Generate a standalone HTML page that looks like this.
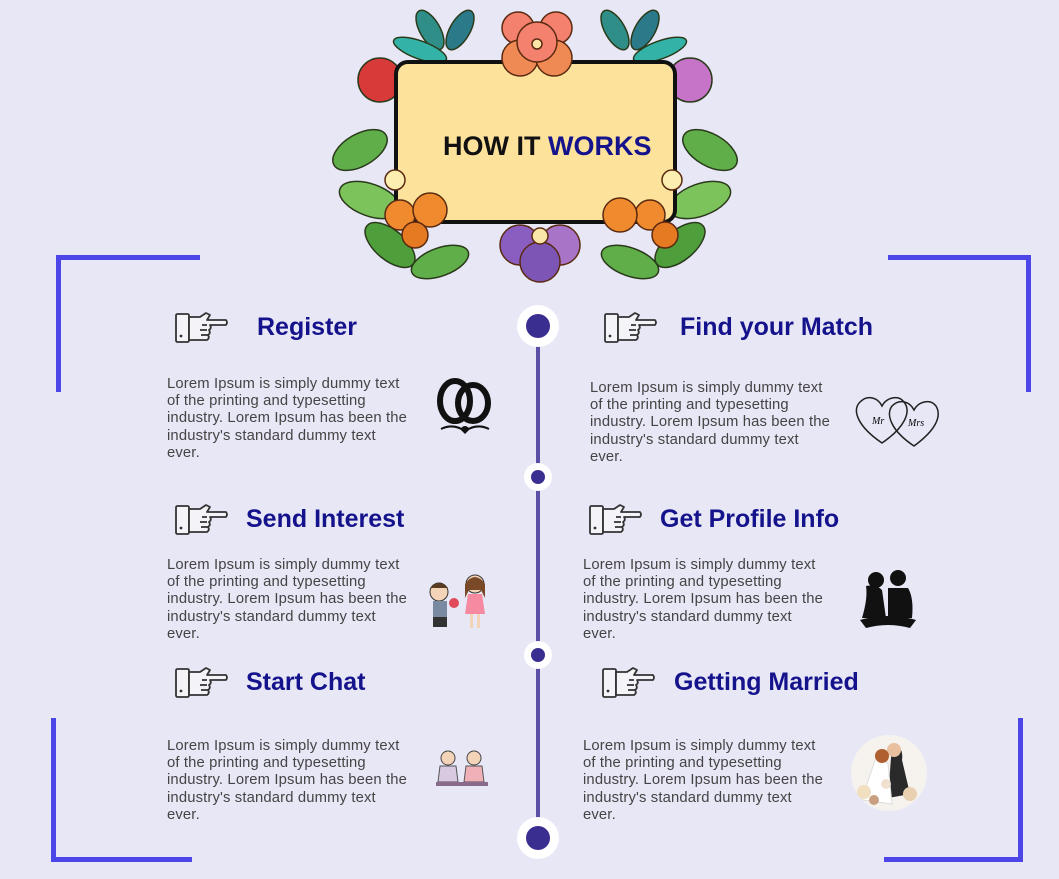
<!DOCTYPE html>
<html><head><meta charset="utf-8"><style>
body{margin:0;width:1059px;height:879px;background:#e8e7f6;position:relative;overflow:hidden;font-family:"Liberation Sans",sans-serif}
.a{position:absolute}
.h{position:absolute;color:#15138c;font-weight:bold;font-size:25px;line-height:30px;white-space:nowrap}
.p{position:absolute;color:#444;font-size:14.8px;line-height:17.2px;white-space:nowrap;letter-spacing:0.15px}
.br{position:absolute;background:#4c45e8}
</style></head><body>
<div class="br" style="left:56px;top:255px;width:5px;height:137px"></div>
<div class="br" style="left:56px;top:255px;width:144px;height:5px"></div>
<div class="br" style="left:1026px;top:255px;width:5px;height:137px"></div>
<div class="br" style="left:888px;top:255px;width:143px;height:5px"></div>
<div class="br" style="left:51px;top:718px;width:5px;height:144px"></div>
<div class="br" style="left:51px;top:857px;width:141px;height:5px"></div>
<div class="br" style="left:1018px;top:718px;width:5px;height:144px"></div>
<div class="br" style="left:884px;top:857px;width:139px;height:5px"></div>

<svg class="a" style="left:320px;top:0" width="430" height="290" viewBox="0 0 430 290">
<g stroke="#2a3a1a" stroke-width="1.5">
<ellipse cx="40" cy="150" rx="30" ry="16" fill="#5fae4a" transform="rotate(-30 40 150)"/>
<ellipse cx="50" cy="200" rx="32" ry="16" fill="#7cc35c" transform="rotate(20 50 200)"/>
<ellipse cx="70" cy="245" rx="30" ry="15" fill="#4f9e3c" transform="rotate(40 70 245)"/>
<ellipse cx="390" cy="150" rx="30" ry="16" fill="#5fae4a" transform="rotate(30 390 150)"/>
<ellipse cx="380" cy="200" rx="32" ry="16" fill="#7cc35c" transform="rotate(-20 380 200)"/>
<ellipse cx="360" cy="245" rx="30" ry="15" fill="#4f9e3c" transform="rotate(-40 360 245)"/>
<ellipse cx="120" cy="262" rx="30" ry="14" fill="#5fae4a" transform="rotate(-20 120 262)"/>
<ellipse cx="310" cy="262" rx="30" ry="14" fill="#5fae4a" transform="rotate(20 310 262)"/>
<ellipse cx="110" cy="30" rx="22" ry="10" fill="#2f8f88" transform="rotate(60 110 30)"/>
<ellipse cx="140" cy="30" rx="22" ry="10" fill="#2b7a8a" transform="rotate(-60 140 30)"/>
<ellipse cx="100" cy="50" rx="28" ry="9" fill="#33b3a8" transform="rotate(20 100 50)"/>
<ellipse cx="295" cy="30" rx="22" ry="10" fill="#2f8f88" transform="rotate(60 295 30)"/>
<ellipse cx="325" cy="30" rx="22" ry="10" fill="#2b7a8a" transform="rotate(-60 325 30)"/>
<ellipse cx="340" cy="50" rx="28" ry="9" fill="#33b3a8" transform="rotate(-20 340 50)"/>
<circle cx="60" cy="80" r="22" fill="#d83a3a"/>
<circle cx="370" cy="80" r="22" fill="#c574c8"/>
</g>
<rect x="76" y="62" width="279" height="160" rx="12" fill="#fde29c" stroke="#111" stroke-width="4"/>
<g stroke="#5a2a10" stroke-width="1.5">
<circle cx="198" cy="28" r="16" fill="#f4806e"/><circle cx="236" cy="28" r="16" fill="#f4806e"/>
<circle cx="200" cy="58" r="18" fill="#f08a55"/><circle cx="234" cy="58" r="18" fill="#f08a55"/>
<circle cx="217" cy="42" r="20" fill="#f4806e"/><circle cx="217" cy="44" r="5" fill="#f9e6a8"/>
<circle cx="200" cy="245" r="20" fill="#8a5ec0"/><circle cx="240" cy="245" r="20" fill="#a874c8"/>
<circle cx="220" cy="262" r="20" fill="#7d55b5"/><circle cx="220" cy="236" r="8" fill="#f9e6a8"/>
<circle cx="80" cy="215" r="15" fill="#f08a2e"/><circle cx="110" cy="210" r="17" fill="#f08a2e"/><circle cx="95" cy="235" r="13" fill="#e57a22"/>
<circle cx="330" cy="215" r="15" fill="#f08a2e"/><circle cx="300" cy="215" r="17" fill="#f08a2e"/><circle cx="345" cy="235" r="13" fill="#e57a22"/>
<circle cx="75" cy="180" r="10" fill="#fbeeb0"/><circle cx="352" cy="180" r="10" fill="#fbeeb0"/>
</g>
<text x="123" y="155" font-family="Liberation Sans" font-weight="bold" font-size="27" fill="#111">HOW IT <tspan fill="#15138c">WORKS</tspan></text>
</svg>

<div class="a" style="left:536px;top:326px;width:4px;height:512px;background:#5b4fa5"></div>
<svg class="a" style="left:510px;top:300px" width="56" height="566">
<circle cx="28" cy="26" r="21" fill="#fff"/><circle cx="28" cy="26" r="12" fill="#3b2e91"/>
<circle cx="28" cy="177" r="14" fill="#fff"/><circle cx="28" cy="177" r="7" fill="#3b2e91"/>
<circle cx="28" cy="355" r="14" fill="#fff"/><circle cx="28" cy="355" r="7" fill="#3b2e91"/>
<circle cx="28" cy="538" r="21" fill="#fff"/><circle cx="28" cy="538" r="12" fill="#3b2e91"/>
</svg>

<svg width="0" height="0" style="position:absolute"><defs>
<symbol id="hand" viewBox="0 0 56 34"><g fill="#f3f3f8" stroke="#333" stroke-width="1.8" stroke-linejoin="round">
<rect x="2" y="3" width="13" height="28" rx="1.5"/>
<path d="M15 6 L26 6 L32 2 L36 4 L33 9 L52 9 Q54 11.5 52 14 L36 14 Q38 17 35 19 Q37 22 34 24 Q36 27 33 29 L15 29 Z"/>
<path d="M33 19 L26 19 M35 24 L27 24 M33 14 L28 14" fill="none"/></g>
<circle cx="7" cy="25" r="1.4" fill="#333"/></symbol></defs></svg>

<svg class="a" style="left:174px;top:311px" width="56" height="34"><use href="#hand"/></svg>
<svg class="a" style="left:603px;top:311px" width="56" height="34"><use href="#hand"/></svg>
<svg class="a" style="left:174px;top:503px" width="56" height="34"><use href="#hand"/></svg>
<svg class="a" style="left:588px;top:503px" width="56" height="34"><use href="#hand"/></svg>
<svg class="a" style="left:174px;top:666px" width="56" height="34"><use href="#hand"/></svg>
<svg class="a" style="left:601px;top:666px" width="56" height="34"><use href="#hand"/></svg>

<div class="h" style="left:257px;top:312px">Register</div>
<div class="h" style="left:680px;top:312px">Find your Match</div>
<div class="h" style="left:246px;top:504px">Send Interest</div>
<div class="h" style="left:660px;top:504px">Get Profile Info</div>
<div class="h" style="left:246px;top:667px">Start Chat</div>
<div class="h" style="left:674px;top:667px">Getting Married</div>

<div class="p" style="left:167px;top:376px">Lorem Ipsum is simply dummy text<br>of the printing and typesetting<br>industry. Lorem Ipsum has been the<br>industry's standard dummy text<br>ever.</div>
<div class="p" style="left:590px;top:380px">Lorem Ipsum is simply dummy text<br>of the printing and typesetting<br>industry. Lorem Ipsum has been the<br>industry's standard dummy text<br>ever.</div>
<div class="p" style="left:167px;top:557px">Lorem Ipsum is simply dummy text<br>of the printing and typesetting<br>industry. Lorem Ipsum has been the<br>industry's standard dummy text<br>ever.</div>
<div class="p" style="left:583px;top:557px">Lorem Ipsum is simply dummy text<br>of the printing and typesetting<br>industry. Lorem Ipsum has been the<br>industry's standard dummy text<br>ever.</div>
<div class="p" style="left:167px;top:738px">Lorem Ipsum is simply dummy text<br>of the printing and typesetting<br>industry. Lorem Ipsum has been the<br>industry's standard dummy text<br>ever.</div>
<div class="p" style="left:583px;top:738px">Lorem Ipsum is simply dummy text<br>of the printing and typesetting<br>industry. Lorem Ipsum has been the<br>industry's standard dummy text<br>ever.</div>

<svg class="a" style="left:433px;top:375px" width="64" height="66"><g fill="none" stroke="#111" stroke-width="6">
<ellipse cx="22" cy="26" rx="15" ry="20"/><ellipse cx="40" cy="28" rx="15" ry="18"/></g>
<path d="M8 54 Q20 48 32 56 Q44 48 56 54" stroke="#111" stroke-width="2" fill="none"/><path d="M28 55 l4 4 l4 -4 a2 2 0 0 0 -8 0z" fill="#111"/></svg>
<svg class="a" style="left:852px;top:388px" width="90" height="62"><g fill="none" stroke="#222" stroke-width="1.5">
<path d="M30 55 C5 38 0 22 8 14 C16 6 26 10 30 18 C34 10 46 6 52 14 C60 24 52 40 30 55Z"/>
<path d="M62 58 C38 42 34 26 40 18 C48 10 58 14 62 22 C66 14 78 10 84 18 C90 28 84 42 62 58Z"/></g>
<text x="20" y="36" font-size="10" font-family="Liberation Serif" font-style="italic">Mr</text><text x="56" y="38" font-size="10" font-family="Liberation Serif" font-style="italic">Mrs</text></svg>
<svg class="a" style="left:425px;top:570px" width="66" height="62">
<circle cx="14" cy="22" r="9" fill="#f3d4b8" stroke="#333"/><path d="M5 18 Q14 8 23 18" fill="#5a3a20"/><rect x="8" y="31" width="14" height="16" fill="#7a8aa0"/><rect x="8" y="47" width="14" height="10" fill="#333"/>
<circle cx="50" cy="14" r="9" fill="#f3d4b8" stroke="#333"/><path d="M40 14 Q50 0 60 14 L60 28 L56 20 L44 20 L40 28Z" fill="#7a4a28"/><path d="M43 24 L57 24 L60 44 L40 44Z" fill="#f58aa0"/><rect x="45" y="44" width="3" height="14" fill="#f3d4b8"/><rect x="52" y="44" width="3" height="14" fill="#f3d4b8"/>
<circle cx="29" cy="33" r="5" fill="#e04a5a"/></svg>
<svg class="a" style="left:856px;top:568px" width="64" height="62" fill="#111">
<circle cx="20" cy="12" r="8"/><path d="M10 18 Q20 16 26 22 L30 50 L6 50 Q12 30 10 18Z"/>
<circle cx="42" cy="10" r="8"/><path d="M32 20 L52 20 Q58 30 56 50 L32 50Z"/>
<path d="M4 52 Q32 44 60 52 L54 60 Q32 54 10 60Z"/></svg>
<svg class="a" style="left:434px;top:746px" width="56" height="44">
<circle cx="14" cy="12" r="7" fill="#f3d4b8" stroke="#444"/><path d="M6 20 L22 20 L24 36 L4 36Z" fill="#d8c8e0" stroke="#555"/>
<circle cx="40" cy="12" r="7" fill="#f3d4b8" stroke="#444"/><path d="M32 20 L48 20 L50 36 L30 36Z" fill="#f0b0b8" stroke="#555"/>
<rect x="2" y="36" width="52" height="4" fill="#8a6a8a"/></svg>
<svg class="a" style="left:848px;top:734px" width="82" height="78">
<circle cx="41" cy="39" r="38" fill="#f6f2ee"/><path d="M44 10 Q56 12 54 26 L62 60 L40 64 Z" fill="#2a2a2a"/><circle cx="46" cy="16" r="7" fill="#e8c0a0"/>
<path d="M30 18 Q22 40 14 66 L44 70 L40 30Z" fill="#fff" stroke="#ddd"/><circle cx="34" cy="22" r="7" fill="#b06030"/>
<circle cx="16" cy="58" r="7" fill="#f0e0c0"/><circle cx="62" cy="60" r="7" fill="#e8d0b0"/><circle cx="26" cy="66" r="5" fill="#c8a080"/><circle cx="38" cy="50" r="5" fill="#f0e0d0"/></svg>
</body></html>
